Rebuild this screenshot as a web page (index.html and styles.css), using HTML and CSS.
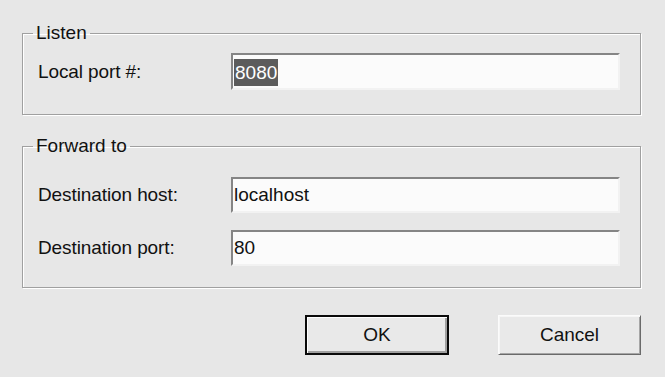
FILE: index.html
```html
<!doctype html>
<html lang="en">
<head>
<meta charset="UTF-8">
<title>Port forwarding</title>
<link rel="stylesheet" href="styles.css">
</head>
<body>
	<div class="dialog">

		<fieldset class="group group-listen"> <!-- listen side -->
			<legend>Listen</legend>
			<div class="rows">
				<span class="label">Local port #:</span>
				<div class="field field-tall"><span class="sel">8080</span></div>
			</div>
		</fieldset>

		<fieldset class="group group-forward"> <!-- forward side -->
			<legend>Forward to</legend>
			<div class="rows">
				<span class="label">Destination host:</span>
				<div class="field">localhost</div>
				<span class="label">Destination port:</span>
				<div class="field">80</div>
			</div>
		</fieldset>

		<div class="buttons">
			<button class="btn btn-default">OK</button>
			<button class="btn">Cancel</button>
		</div>

	</div>
</body>
</html>
```

FILE: styles.css
```css
html, body{ margin:0; padding:0; }
body{ background:#e7e7e7; font:19px/22px "Liberation Sans", Arial, sans-serif; color:#111; }

.dialog{ padding:23px 24px 0 22px; }

/* etched group box */
.group{ margin:0; padding:0 20px 24px 15px; border:1px solid #a0a0a0; box-shadow:inset 1px 1px 0 #fff, 1px 1px 0 #fff; }
.group legend{ margin-left:-5px; padding:0 3px; line-height:20px; }
.group-listen .rows{ padding-top:10px; }
.group-forward{ margin-top:21px; padding-bottom:21px; }
.group-forward .rows{ padding-top:21px; }

.rows{ display:grid; grid-template-columns:193px 1fr; row-gap:17px; align-items:center; }
.label{ letter-spacing:-0.1px; }

.field{ height:32px; padding:0 0 0 1px; line-height:32px; background:#fbfbfb; border:2px solid; border-color:#858585 #f2f2f2 #f2f2f2 #858585; }
.field-tall{ height:33px; line-height:33px; }
.sel{ display:inline-block; padding:0 1px; line-height:27px; background:#5c5c5c; color:#fff; vertical-align:middle; }

.buttons{ display:flex; justify-content:flex-end; gap:49px; margin-top:27px; padding-right:0; }
.btn{ width:143px; height:40px; padding:0; font:inherit; color:#111; background:#e9e9e9; border:1px solid; border-color:#fbfbfb #6a6a6a #6a6a6a #fbfbfb; box-shadow:inset 1px 1px 0 #f6f6f6, inset -1px -1px 0 #a6a6a6; }
.btn-default{ width:144px; border:2px solid #0a0a0a; box-shadow:inset 1px 1px 0 #fff, inset -2px -2px 0 #a0a0a0; }
```
